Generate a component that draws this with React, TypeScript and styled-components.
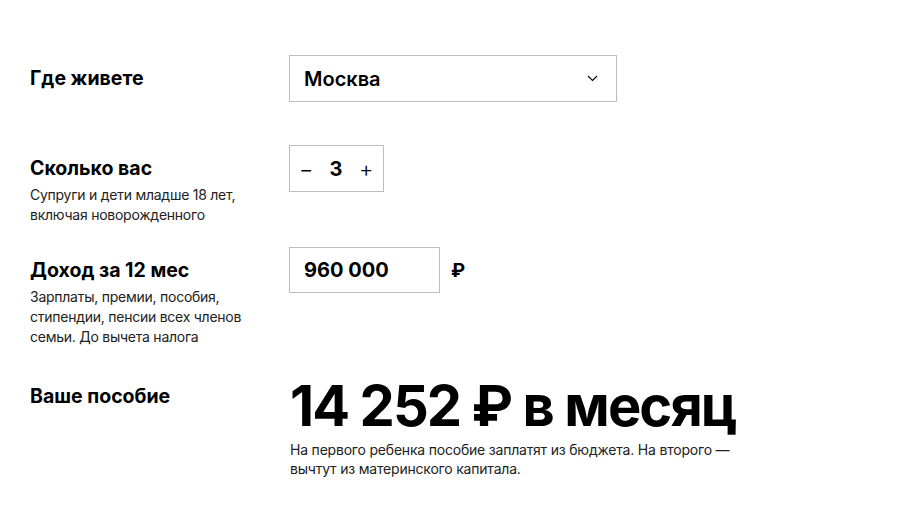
import { createGlobalStyle, styled } from "styled-components";

const GlobalStyle = createGlobalStyle`
  body {
    margin: 0;
    background: #fff;
    font-family: "Inter", "Noto Sans", sans-serif;
    color: #000;
  }
`

export default function App() {
    return (
        <>
            <GlobalStyle />
            <Page>
                <Row $space={43}>
                    <Label>
                        <Title>Где живете</Title>
                    </Label>
                    <Select>
                        <SelectValue>Москва</SelectValue>
                        <Chevron width="11" height="7" viewBox="0 0 11 7">
                            <polyline points="1,1 5.5,5.5 10,1" fill="none" stroke="#000" strokeWidth="1.1" />
                        </Chevron>
                    </Select>
                </Row>

                <Row $space={22}>
                    <Label>
                        <Title>Сколько вас</Title>
                        <Hint>Супруги и дети младше 18 лет,<br />включая новорожденного</Hint>
                    </Label>
                    <Stepper>
                        <StepButton>−</StepButton>
                        <StepValue>3</StepValue>
                        <StepButton>+</StepButton>
                    </Stepper>
                </Row>

                <Row $space={25}>
                    <Label>
                        <Title>Доход за 12 мес</Title>
                        <Hint>Зарплаты, премии, пособия,<br />стипендии, пенсии всех членов<br />семьи. До вычета налога</Hint>
                    </Label>
                    <Money>
                        <Input>960 000</Input>
                        <Currency>₽</Currency>
                    </Money>
                </Row>

                <Row $space={0}>
                    <Label $top={12}>
                        <Title>Ваше пособие</Title>
                    </Label>
                    <Result>
                        <Amount>14 252 ₽ в месяц</Amount>
                        <Note>На первого ребенка пособие заплатят из бюджета. На второго —<br />вычтут из материнского капитала.</Note>
                    </Result>
                </Row>
            </Page>
        </>
    )
}

const Page = styled.div`
    padding: 55px 0 0 30px;
    display: flex;
    flex-direction: column;
`

const Row = styled.div<{ $space: number }>`
    display: grid;
    grid-template-columns: 259px 1fr;
    align-items: start;
    margin-bottom: ${p => p.$space}px;
`

const Label = styled.div<{ $top?: number }>`
    display: flex;
    flex-direction: column;
    row-gap: 5px;
    padding-top: ${p => p.$top ?? 11}px;
`

const Title = styled.div`
    font-size: 19.5px;
    line-height: 24px;
    font-weight: 700;
`

const Hint = styled.div`
    font-size: 14px;
    line-height: 20px;
    letter-spacing: -0.25px;
    color: #222;
`

const Box = styled.div`
    box-sizing: border-box;
    border: 1px solid #bdbdbd;
    display: flex;
    align-items: center;
`

const Select = styled(Box)`
    width: 328px;
    height: 47px;
    padding: 0 18px 0 14px;
    justify-content: space-between;
`

const SelectValue = styled.span`
    font-size: 20px;
    font-weight: 600;
`

const Chevron = styled.svg`
    display: block;
`

const Stepper = styled(Box)`
    width: 95px;
    height: 47px;
    justify-content: space-between;
    padding: 0 10px 0 9px;
`

const StepButton = styled.span`
    width: 14px;
    text-align: center;
    font-size: 22px;
    font-weight: 300;
`

const StepValue = styled.span`
    font-size: 20px;
    font-weight: 700;
`

const Money = styled.div`
    display: flex;
    align-items: center;
    column-gap: 11px;
`

const Input = styled(Box)`
    width: 151px;
    height: 46px;
    padding: 0 14px;
    font-size: 20px;
    font-weight: 700;
`

const Currency = styled.span`
    font-size: 19px;
    font-weight: 700;
`

const Result = styled.div`
    display: flex;
    flex-direction: column;
    padding-left: 1px;
`

const Amount = styled.div`
    font-size: 56px;
    line-height: 68px;
    font-weight: 700;
    letter-spacing: -1.9px;
`

const Note = styled.div`
    font-size: 14px;
    line-height: 19px;
    letter-spacing: -0.2px;
    color: #222;
`
